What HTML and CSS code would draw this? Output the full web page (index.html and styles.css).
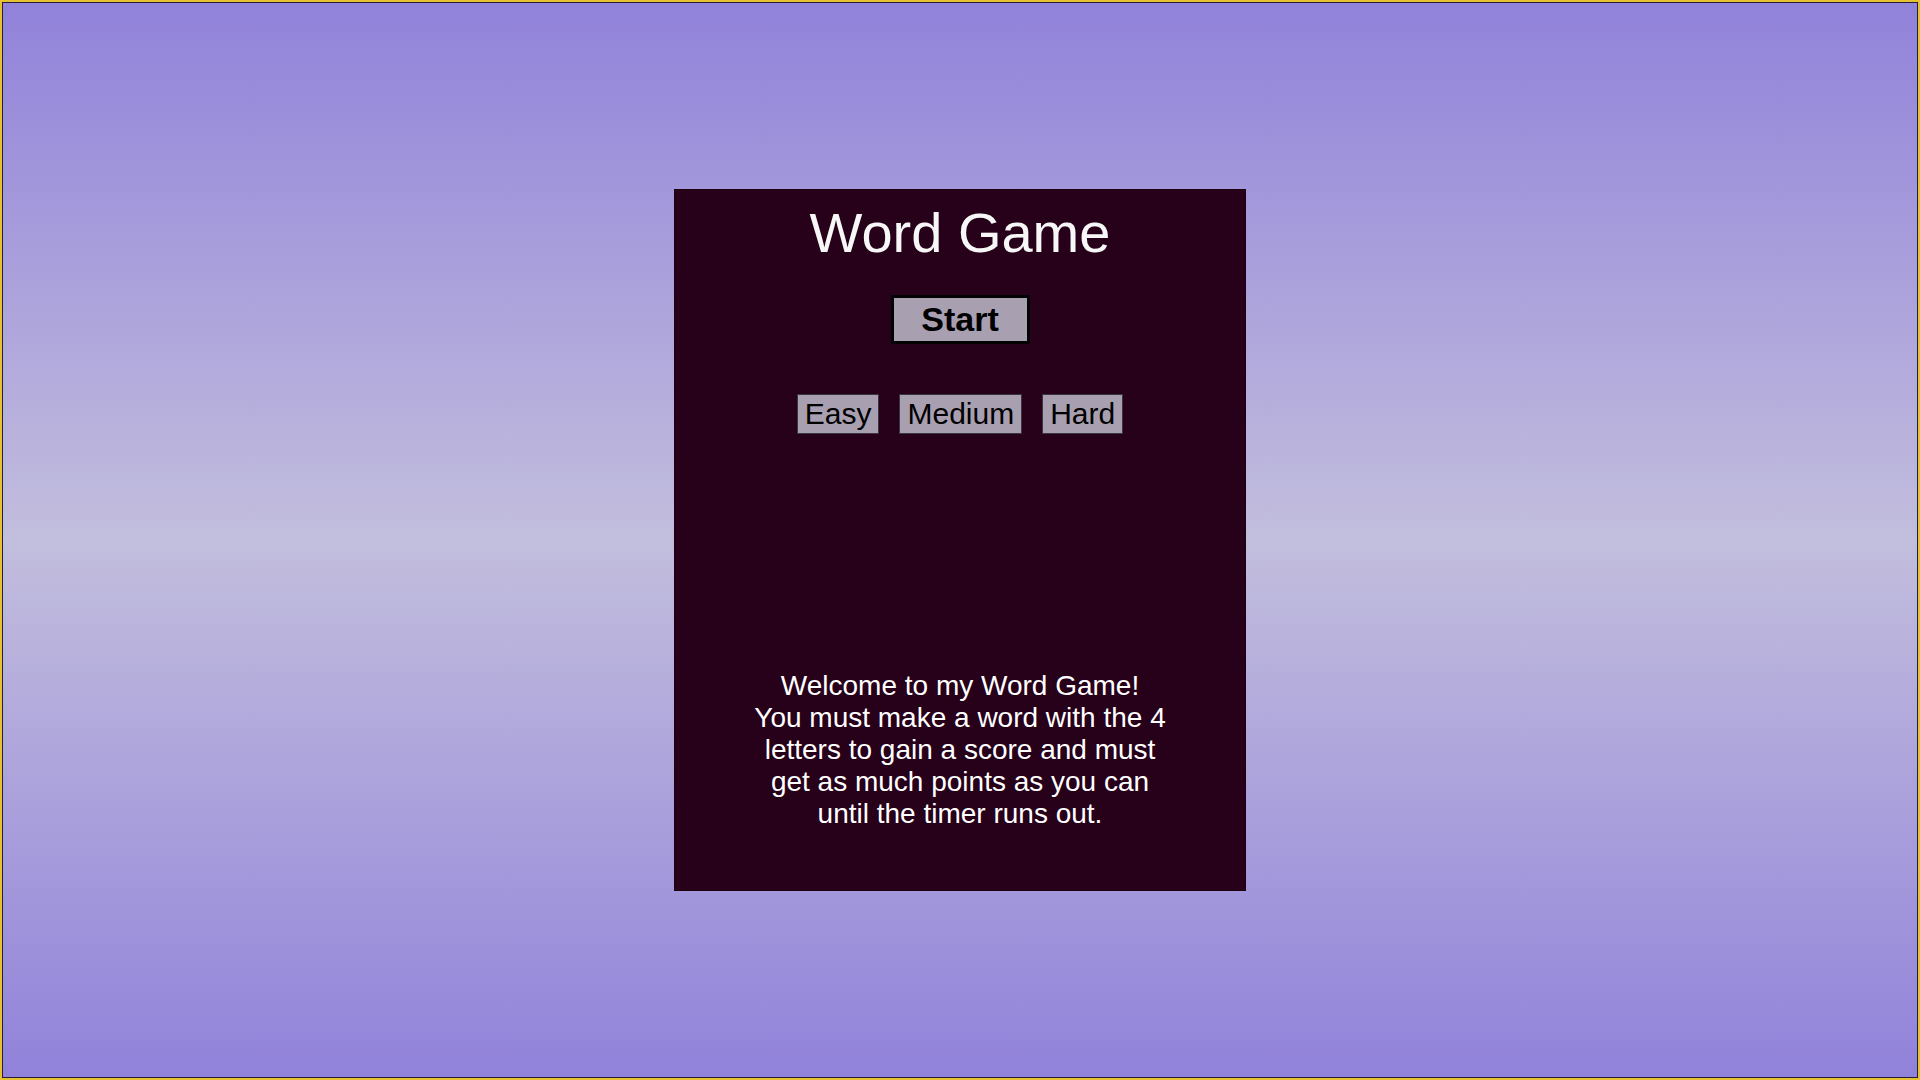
FILE: index.html
```html
<!DOCTYPE html>
<html lang="en">
<head>
<meta charset="utf-8">
<title>Word Game</title>
<link rel="stylesheet" href="styles.css">
</head>
<body>
<div class="frame">
  <div class="screen">
    <main class="card">
      <h1 class="title">Word Game</h1>
      <button class="start-btn">Start</button>
      <div class="levels">
        <button class="level-btn">Easy</button>
        <button class="level-btn">Medium</button>
        <button class="level-btn">Hard</button>
      </div>
      <div class="game-area"></div>
      <p class="intro">Welcome to my Word Game!<br>You must make a word with the 4 letters to gain a score and must get as much points as you can until the timer runs out.</p>
    </main>
  </div>
</div>
</body>
</html>
```

FILE: styles.css
```css
html, body {
  margin: 0;
  padding: 0;
  height: 100%;
}

body {
  font-family: "Liberation Sans", Arial, sans-serif;
}

.frame {
  height: 100vh;
  box-sizing: border-box;
  border: 2px solid #e6c232;
}

.screen {
  height: 100%;
  box-sizing: border-box;
  border: 1px solid #241d3c;
  background: linear-gradient(180deg, #9182da 0%, #c2bedd 50%, #9182da 100%);
  display: flex;
  align-items: center;
  justify-content: center;
}

.card {
  width: 572px;
  height: 702px;
  box-sizing: border-box;
  background: #27001a;
  border: 1px solid #1a0011;
  padding-top: 10px;
  display: flex;
  flex-direction: column;
  align-items: center;
}

.title {
  margin: 0;
  font-size: 56px;
  font-weight: normal;
  line-height: normal;
  color: #f7f7f7;
}

.start-btn {
  margin-top: 30px;
  width: 139px;
  height: 49px;
  box-sizing: border-box;
  border: 3px solid #030303;
  background: #a89fb1;
  color: #000;
  font-family: "Liberation Sans", Arial, sans-serif;
  font-size: 34px;
  font-weight: bold;
  padding: 0;
}

.levels {
  margin-top: 50px;
  display: flex;
  gap: 20px;
}

.level-btn {
  height: 40px;
  box-sizing: border-box;
  border: 1px solid #3b3540;
  background: #a89fb1;
  color: #000;
  font-family: "Liberation Sans", Arial, sans-serif;
  font-size: 30px;
  padding: 0 7px;
  line-height: 1;
}

.game-area {
  height: 236px;
}

.intro {
  margin: 0;
  width: 420px;
  text-align: center;
  color: #ffffff;
  font-size: 28px;
  line-height: 32px;
}
```
